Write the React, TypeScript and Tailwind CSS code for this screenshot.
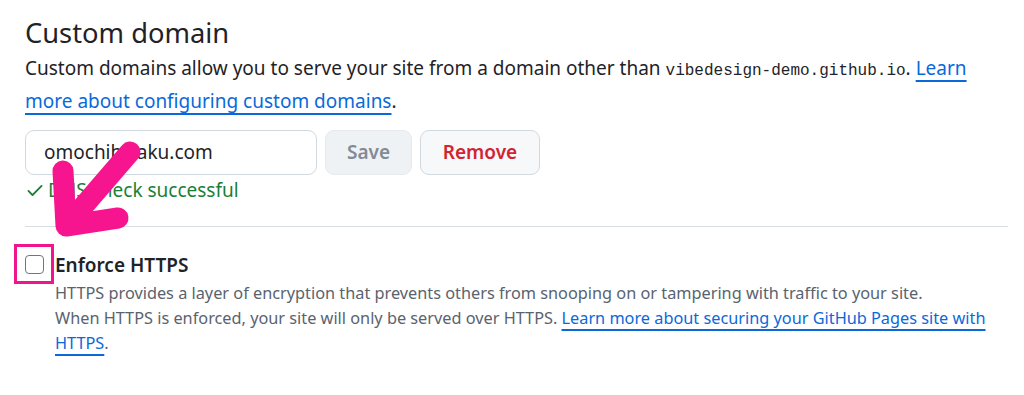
import React from "react";

export default function App() {
  return (
    <div
      className="relative w-[1024px] h-[395px] overflow-hidden bg-white text-[#1f2328]"
      style={{ fontFamily: '"Noto Sans", "Liberation Sans", sans-serif' }}
    >
      <div className="pl-[25px] pr-[16px] pt-[14px]">
        <h2 className="text-[27.3px] leading-[38px] font-normal">Custom domain</h2>
        <p className="text-[19px] leading-[30px] mt-[1px]">
          Custom domains allow you to serve your site from a domain other than{" "}
          <code className="text-[16px]" style={{ fontFamily: '"Liberation Mono", monospace' }}>
            vibedesign-demo.github.io
          </code>
          .{" "}
          <a className="text-[#0969da] underline underline-offset-[5px] decoration-[2px]">
            Learn
            <br />
            more about configuring custom domains
          </a>
          .
        </p>
        <div className="flex gap-[8px] mt-[14px]">
          <div className="w-[292px] h-[45px] border border-[#d1d9e0] rounded-[9px] flex items-center pl-[18px] text-[19px]">
            omochibiyaku.com
          </div>
          <div className="w-[87px] h-[45px] rounded-[9px] bg-[#eff2f5] border border-[#e6eaef] flex items-center justify-center text-[19px] font-semibold text-[#818b98]">
            Save
          </div>
          <div className="w-[120px] h-[45px] rounded-[9px] bg-[#f6f8fa] border border-[#d1d9e0] flex items-center justify-center text-[19px] font-semibold text-[#d1242f]">
            Remove
          </div>
        </div>
        <div className="flex items-center gap-[3px] mt-[2px] text-[19px] leading-[26px] text-[#1a7f37]">
          <svg width="20" height="20" viewBox="0 0 16 16" fill="currentColor">
            <path d="M13.78 4.22a.75.75 0 0 1 0 1.06l-7.25 7.25a.75.75 0 0 1-1.06 0L2.22 9.28a.751.751 0 0 1 .018-1.042.751.751 0 0 1 1.042-.018L6 10.94l6.72-6.72a.75.75 0 0 1 1.06 0Z" />
          </svg>
          <span>DNS check successful</span>
        </div>
        <div className="mt-[23px] border-t border-[#d8dee4]" />
        <div className="flex mt-[26px]">
          <div className="w-[30px] shrink-0 pt-[2px]">
            <div className="w-[19px] h-[19px] border-[1.5px] border-[#6e7781] rounded-[4px]" />
          </div>
          <div>
            <div className="text-[19px] leading-[24px] font-semibold">Enforce HTTPS</div>
            <p className="text-[16.3px] leading-[25px] text-[#59636e] mt-[4px]">
              HTTPS provides a layer of encryption that prevents others from snooping on or tampering with traffic to your site.
              <br />
              When HTTPS is enforced, your site will only be served over HTTPS.{" "}
              <a className="text-[#0969da] underline underline-offset-[5px] decoration-[2px]">
                Learn more about securing your GitHub Pages site with
                <br />
                HTTPS
              </a>
              .
            </p>
          </div>
        </div>
      </div>

      <div className="absolute left-[14px] top-[244px] w-[40px] h-[40px] border-[3px] border-[#f0158c]" />
      <svg className="absolute left-0 top-0" width="200" height="260" viewBox="0 0 200 260">
        <path
          d="M130 152 L68 224 M63 171 L66 226 L118 218"
          fill="none"
          stroke="#f7158f"
          strokeWidth="21"
          strokeLinecap="round"
          strokeLinejoin="round"
        />
      </svg>
    </div>
  );
}
